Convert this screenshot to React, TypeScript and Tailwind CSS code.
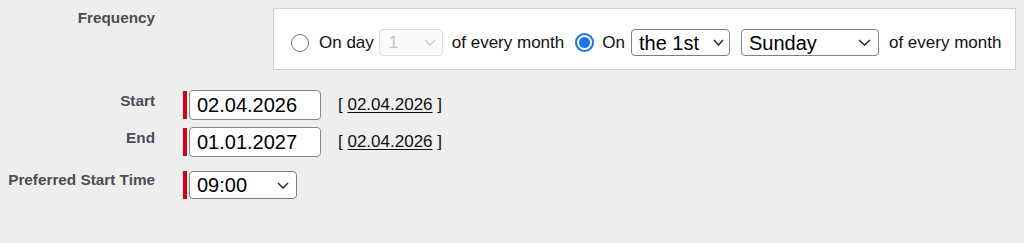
import React from "react";

const FONT = { fontFamily: '"Liberation Sans", Arial, Helvetica, sans-serif' };

function Chevron({ w = 11, light = false }: { w?: number; light?: boolean }) {
  return (
    <svg width={w} height={7} viewBox={`0 0 ${w} 7`} className="shrink-0">
      <path
        d={`M1 1 L${w / 2} 6 L${w - 1} 1`}
        fill="none"
        stroke={light ? "#c9c9c9" : "#222"}
        strokeWidth={1.4}
      />
    </svg>
  );
}

function Select({
  value,
  className,
  chevronW = 11,
  disabled = false,
}: {
  value: string;
  className: string;
  chevronW?: number;
  disabled?: boolean;
}) {
  return (
    <div
      className={`flex items-center justify-between rounded-[4px] border ${
        disabled ? "border-[#dcdcdc] bg-[#fafafa] text-[#c4c4c4]" : "border-[#7f7f7f] bg-white text-black"
      } ${className}`}
    >
      <span className="leading-none">{value}</span>
      <Chevron w={chevronW} light={disabled} />
    </div>
  );
}

function Radio({ checked }: { checked?: boolean }) {
  if (checked) {
    return (
      <span className="flex h-[19px] w-[19px] shrink-0 items-center justify-center rounded-full border-[2px] border-[#1a73e8] bg-white">
        <span className="h-[11px] w-[11px] rounded-full bg-[#1a73e8]" />
      </span>
    );
  }
  return <span className="h-[18px] w-[18px] shrink-0 rounded-full border border-[#767676] bg-white" />;
}

function Label({ children, pt = "pt-0" }: { children: React.ReactNode; pt?: string }) {
  return (
    <div className={`w-[155px] shrink-0 text-right text-[15.3px] font-bold leading-[18px] text-[#4c4c54] ${pt}`}>
      {children}
    </div>
  );
}

function Required() {
  return <span className="h-[28px] w-[4px] shrink-0 bg-[#d0021b]" />;
}

function DateRow({ label, value, mt }: { label: string; value: string; mt: string }) {
  return (
    <div className={`flex items-start ${mt}`}>
      <Label pt="pt-[2px]">{label}</Label>
      <div className="ml-[28px] flex items-center">
        <Required />
        <div className="ml-[2px] flex h-[30px] w-[132px] items-center rounded-[4px] border border-[#888] bg-white pl-[7px] text-[20px] leading-none text-black">
          {value}
        </div>
        <span className="ml-[17px] text-[17px] text-[#111]">
          [ <span className="underline underline-offset-2">02.04.2026</span> ]
        </span>
      </div>
    </div>
  );
}

export default function App() {
  return (
    <div className="min-h-[243px] w-[1024px] bg-[#eeeeee] pt-[8px]" style={FONT}>
      <div className="flex items-start">
        <Label pt="pt-[1px]">Frequency</Label>
        <div className="ml-[118px] flex h-[62px] w-[743px] items-center border border-[#cfcfcf] bg-white pl-[17px] pt-[7px] text-[17px] text-[#111]">
          <Radio />
          <span className="ml-[10px]">On day</span>
          <Select
            value="1"
            disabled
            chevronW={12}
            className="ml-[5px] h-[27px] w-[64px] pl-[9px] pr-[6px] text-[17px]"
          />
          <span className="ml-[9px]">of every month</span>
          <span className="ml-[11px]">
            <Radio checked />
          </span>
          <span className="ml-[8px]">On</span>
          <Select value="the 1st" chevronW={11} className="ml-[6px] h-[27px] w-[99px] pl-[7px] pr-[5px] text-[20px]" />
          <Select value="Sunday" chevronW={13} className="ml-[11px] h-[27px] w-[138px] pl-[7px] pr-[7px] text-[20px]" />
          <span className="ml-[10px]">of every month</span>
        </div>
      </div>

      <DateRow label="Start" value="02.04.2026" mt="mt-[20px]" />
      <DateRow label="End" value="01.01.2027" mt="mt-[7px]" />

      <div className="mt-[14px] flex items-start">
        <Label pt="pt-0">Preferred Start Time</Label>
        <div className="ml-[28px] flex items-center">
          <Required />
          <Select value="09:00" chevronW={12} className="ml-[2px] h-[28px] w-[108px] pl-[7px] pr-[7px] text-[20px]" />
        </div>
      </div>
    </div>
  );
}
